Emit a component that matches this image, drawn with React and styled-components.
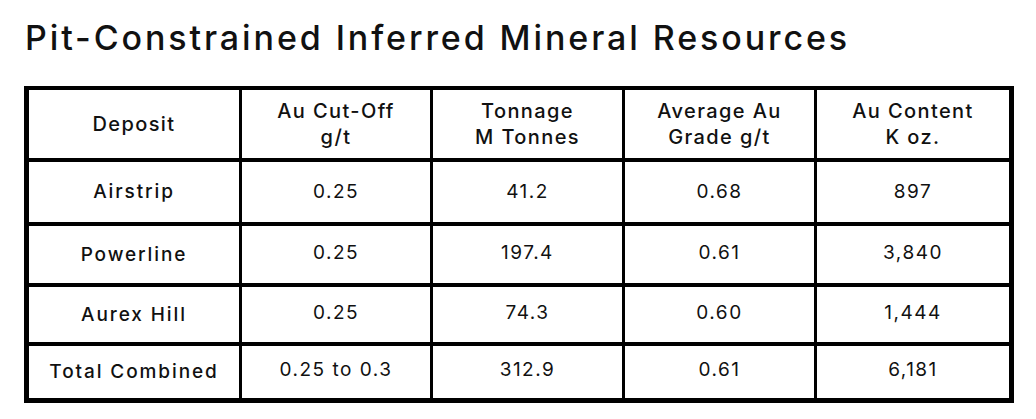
import React from "react";
import styled, { createGlobalStyle } from "styled-components";

const Global = createGlobalStyle`
  html, body { margin: 0; padding: 0; background: #ffffff; }
  body { font-family: Inter, "Open Sans", "Liberation Sans", sans-serif; color: #111111; }
`;

const Page = styled.div`
  width: 1036px;
  height: 419px;
  box-sizing: border-box;
  padding: 18px 0 0 24px;
  display: flex;
  flex-direction: column;
  gap: 28px;
`;

const Title = styled.h1`
  margin: 0 0 0 1px;
  font-size: 34px;
  line-height: 40px;
  font-weight: 500;
  letter-spacing: 2.9px;
  color: #111111;
`;

const Grid = styled.div`
  display: grid;
  width: 990px;
  box-sizing: border-box;
  grid-template-columns: 210px 188px 189px 189px 192px;
  grid-template-rows: 68px 60px 57px 55px 52px;
  column-gap: 3px;
  row-gap: 4px;
  padding: 4px 5px 5px 5px;
  background: #000000;
`;

const Cell = styled.div`
  background: #ffffff;
  display: flex;
  align-items: center;
  justify-content: center;
  text-align: center;
  font-size: ${(p) => (p.$head ? "20px" : "19px")};
  line-height: 26px;
  font-weight: ${(p) => (p.$bold ? 500 : 400)};
  letter-spacing: ${(p) => (p.$head ? "1.4px" : p.$bold ? "1.9px" : "1.5px")};
  color: #111111;
  padding-bottom: ${(p) => (p.$lift ? "4px" : "0")};
`;

const headers = [
  ["Deposit"],
  ["Au Cut-Off", "g/t"],
  ["Tonnage", "M Tonnes"],
  ["Average Au", "Grade g/t"],
  ["Au Content", "K oz."],
];

const rows = [
  ["Airstrip", "0.25", "41.2", "0.68", "897"],
  ["Powerline", "0.25", "197.4", "0.61", "3,840"],
  ["Aurex Hill", "0.25", "74.3", "0.60", "1,444"],
  ["Total Combined", "0.25 to 0.3", "312.9", "0.61", "6,181"],
];

export default function App() {
  return (
    <>
      <Global />
      <Page>
        <Title>Pit-Constrained Inferred Mineral Resources</Title>
        <Grid role="table">
          {headers.map((h, i) => (
            <Cell key={"h" + i} $head $bold role="columnheader">
              <span>
                {h.map((line, j) => (
                  <React.Fragment key={j}>
                    {j > 0 && <br />}
                    {line}
                  </React.Fragment>
                ))}
              </span>
            </Cell>
          ))}
          {rows.map((r, ri) =>
            r.map((v, ci) => (
              <Cell key={ri + "-" + ci} $bold={ci === 0} $lift={ci > 0 && ri > 0} role="cell">
                {v}
              </Cell>
            ))
          )}
        </Grid>
      </Page>
    </>
  );
}
